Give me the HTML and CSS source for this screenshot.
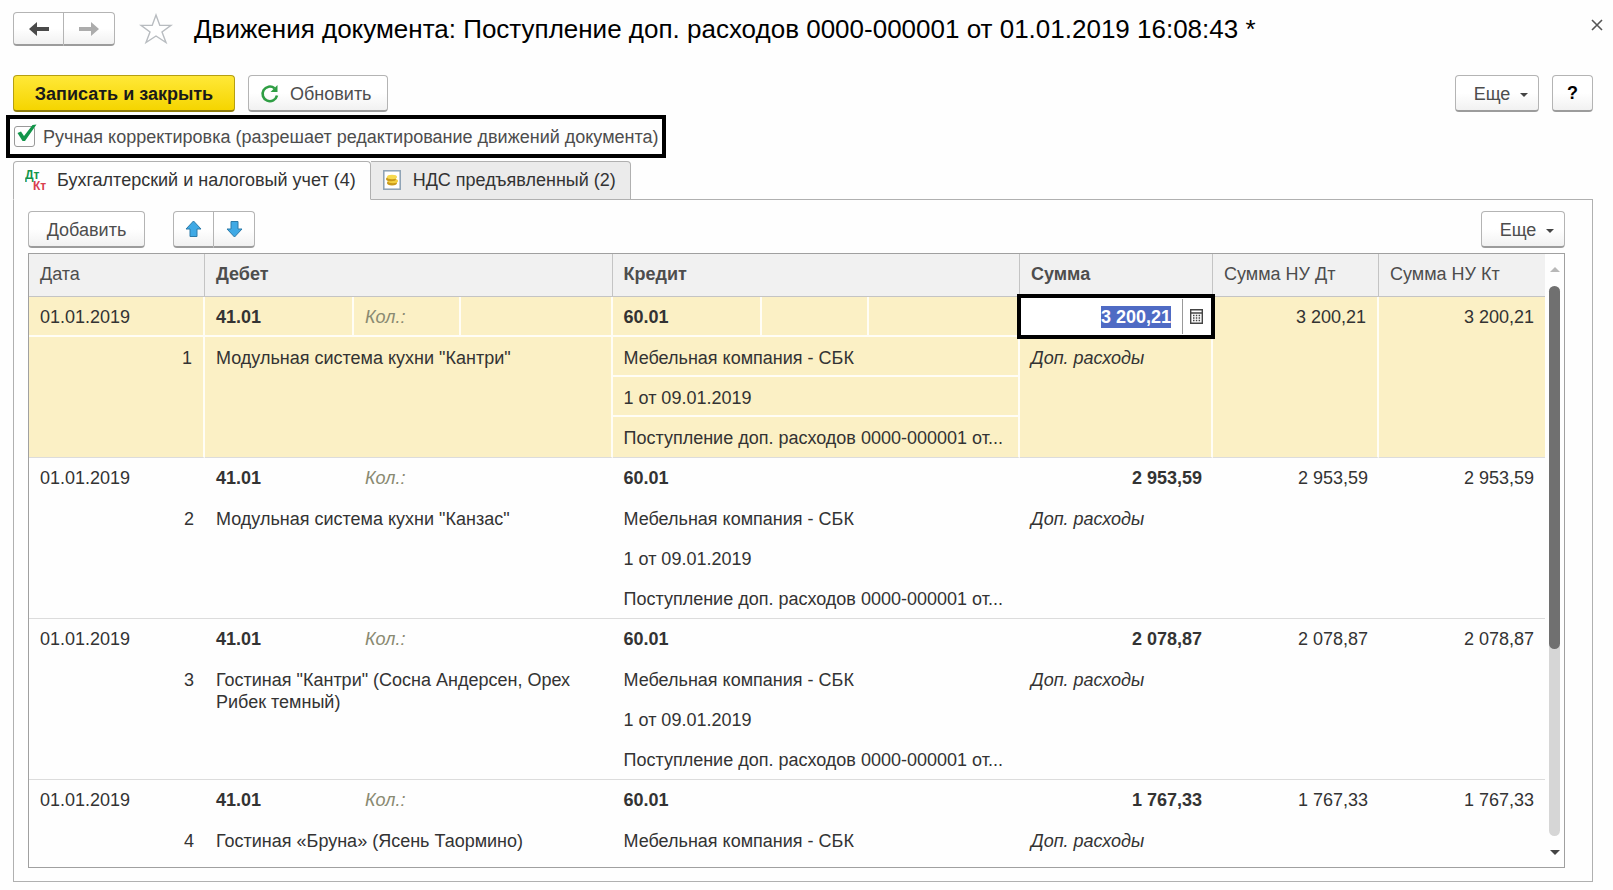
FILE: index.html
```
<!DOCTYPE html>
<html lang="ru">
<head>
    <meta charset="UTF-8">
    <meta name="viewport" content="width=device-width, initial-scale=1.0">
    <title>Движения документа</title>
    <link rel="stylesheet" href="styles.css">
</head>
<body>
    <header class="header">
        <div class="btn-group nav">
            <button class="btn" aria-label="Назад">
                <svg width="20" height="16" viewBox="0 0 20 16"><path d="M0 8 L8 1 V6 H20 V10 H8 V15 Z" fill="#4a4a4a"/></svg>
            </button>
            <button class="btn" aria-label="Вперед">
                <svg width="20" height="16" viewBox="0 0 20 16"><path d="M20 8 L12 1 V6 H0 V10 H12 V15 Z" fill="#acacac"/></svg>
            </button>
        </div>
        <svg class="star" width="34" height="32" viewBox="0 0 34 32"><path d="M17 2 L20.8 12.4 H32 L23 19 L27 29.5 L17 23 L7 29.5 L11 19 L2 12.4 H13.2 Z" fill="#fff" stroke="#b8bcc0" stroke-width="1.4"/></svg>
        <h1>Движения документа: Поступление доп. расходов 0000-000001 от 01.01.2019 16:08:43 *</h1>
        <button class="close" aria-label="Закрыть">
            <svg width="12" height="12" viewBox="0 0 12 12"><path d="M1 1 L11 11 M11 1 L1 11" stroke="#555" stroke-width="1.6"/></svg>
        </button>
    </header>

    <div class="toolbar">
        <button class="btn primary">Записать и закрыть</button>
        <button class="btn refresh">
            <svg width="20" height="20" viewBox="0 0 20 20"><path d="M14.5 4.2 A7.3 7.3 0 1 0 17 11.5" fill="none" stroke="#2f9e44" stroke-width="2.6"/><path d="M17.5 1 V8 H10.5 Z" fill="#2f9e44"/></svg>
            Обновить
        </button>
        <button class="btn more">Еще <span class="caret"></span></button>
        <button class="btn help">?</button>
    </div>

    <div class="manual">
        <span class="check">
            <input type="checkbox" id="manual" checked>
            <svg width="22" height="20" viewBox="0 0 22 20"><path d="M2.5 9 L6 7.5 L9 12 L17.5 1 L21.5 0.5 L10 17 H7.5 Z" fill="#12954a"/></svg>
        </span>
        <label for="manual">Ручная корректировка (разрешает редактирование движений документа)</label>
    </div>

    <div class="tabs" role="tablist">
        <button class="tab active" role="tab" aria-selected="true">
            <svg width="24" height="24" viewBox="0 0 24 24" class="dtkt"><text x="0" y="11" fill="#12954a">Дт</text><text x="8" y="22" fill="#d9404f">Кт</text></svg>
            Бухгалтерский и налоговый учет (4)
        </button>
        <button class="tab" role="tab" aria-selected="false">
            <svg width="18" height="20" viewBox="0 0 18 20"><rect x="0.8" y="0.8" width="16.4" height="18.4" fill="#fff" stroke="#8ba0b3" stroke-width="1.5"/><ellipse cx="9" cy="13" rx="5" ry="2.4" fill="#c99a1c"/><ellipse cx="10" cy="11" rx="5" ry="2.2" fill="#f3cf3f"/><ellipse cx="8" cy="9" rx="5" ry="2.2" fill="#c99a1c"/><ellipse cx="9" cy="7" rx="5" ry="2.2" fill="#f6d94f"/></svg>
            НДС предъявленный (2)
        </button>
    </div>

    <main class="panel">
        <div class="panel-bar">
            <button class="btn add">Добавить</button>
            <div class="btn-group move">
                <button class="btn" aria-label="Вверх">
                    <svg width="17" height="18" viewBox="0 0 17 18"><path d="M8.5 1 L16 9 H12 V16.5 H5 V9 H1 Z" fill="#3fa9e5" stroke="#2c7aa8"/></svg>
                </button>
                <button class="btn" aria-label="Вниз">
                    <svg width="17" height="18" viewBox="0 0 17 18"><path d="M8.5 17 L16 9 H12 V1.5 H5 V9 H1 Z" fill="#3fa9e5" stroke="#2c7aa8"/></svg>
                </button>
            </div>
            <button class="btn more">Еще <span class="caret"></span></button>
        </div>

        <div class="grid">
            <div class="grid-body">
                <table>
                    <colgroup>
                        <col class="c-date">
                        <col class="c-account"><col class="c-qty"><col>
                        <col class="c-account"><col class="c-qty"><col>
                        <col class="c-sum"><col class="c-nu"><col class="c-nu">
                    </colgroup>
                    <thead>
                        <tr>
                            <th>Дата</th>
                            <th colspan="3" class="bold">Дебет</th>
                            <th colspan="3" class="bold">Кредит</th>
                            <th class="bold">Сумма</th>
                            <th>Сумма НУ Дт</th>
                            <th>Сумма НУ Кт</th>
                        </tr>
                    </thead>
                    <tbody class="selected">
                        <tr>
                            <td>01.01.2019</td>
                            <td class="bold">41.01</td><td class="qty">Кол.:</td><td></td>
                            <td class="bold">60.01</td><td></td><td></td>
                            <td class="edit-cell">
                                <div class="editor">
                                    <input type="text" id="sum" value="3 200,21" aria-label="Сумма">
                                    <button aria-label="Калькулятор">
                                        <svg width="13" height="15" viewBox="0 0 13 15"><path d="M0.7 0.7 H12.3 V14.3 H0.7 Z M1 4 H12" fill="none" stroke="#444" stroke-width="1.4"/><path d="M3 6.5 H10.5 M3 9 H10.5 M3 11.5 H10.5" stroke="#444" stroke-width="1.5" stroke-dasharray="1.5 1.3"/></svg>
                                    </button>
                                </div>
                            </td>
                            <td rowspan="4" class="num last">3 200,21</td>
                            <td rowspan="4" class="num last">3 200,21</td>
                        </tr>
                        <tr>
                            <td rowspan="3" class="num last">1</td>
                            <td rowspan="3" colspan="3" class="last">Модульная система кухни "Кантри"</td>
                            <td colspan="3">Мебельная компания - СБК</td>
                            <td rowspan="3" class="note last">Доп. расходы</td>
                        </tr>
                        <tr><td colspan="3">1 от 09.01.2019</td></tr>
                        <tr><td colspan="3" class="last">Поступление доп. расходов 0000-000001 от...</td></tr>
                    </tbody>
                    <tbody>
                        <tr>
                            <td>01.01.2019</td>
                            <td class="bold">41.01</td><td class="qty">Кол.:</td><td></td>
                            <td class="bold">60.01</td><td></td><td></td>
                            <td class="num bold">2 953,59</td>
                            <td rowspan="4" class="num last">2 953,59</td>
                            <td rowspan="4" class="num last">2 953,59</td>
                        </tr>
                        <tr>
                            <td rowspan="3" class="num last">2</td>
                            <td rowspan="3" colspan="3" class="last">Модульная система кухни "Канзас"</td>
                            <td colspan="3">Мебельная компания - СБК</td>
                            <td rowspan="3" class="note last">Доп. расходы</td>
                        </tr>
                        <tr><td colspan="3">1 от 09.01.2019</td></tr>
                        <tr><td colspan="3" class="last">Поступление доп. расходов 0000-000001 от...</td></tr>
                    </tbody>
                    <tbody>
                        <tr>
                            <td>01.01.2019</td>
                            <td class="bold">41.01</td><td class="qty">Кол.:</td><td></td>
                            <td class="bold">60.01</td><td></td><td></td>
                            <td class="num bold">2 078,87</td>
                            <td rowspan="4" class="num last">2 078,87</td>
                            <td rowspan="4" class="num last">2 078,87</td>
                        </tr>
                        <tr>
                            <td rowspan="3" class="num last">3</td>
                            <td rowspan="3" colspan="3" class="last">Гостиная "Кантри" (Сосна Андерсен, Орех Рибек темный)</td>
                            <td colspan="3">Мебельная компания - СБК</td>
                            <td rowspan="3" class="note last">Доп. расходы</td>
                        </tr>
                        <tr><td colspan="3">1 от 09.01.2019</td></tr>
                        <tr><td colspan="3" class="last">Поступление доп. расходов 0000-000001 от...</td></tr>
                    </tbody>
                    <tbody>
                        <tr>
                            <td>01.01.2019</td>
                            <td class="bold">41.01</td><td class="qty">Кол.:</td><td></td>
                            <td class="bold">60.01</td><td></td><td></td>
                            <td class="num bold">1 767,33</td>
                            <td rowspan="2" class="num">1 767,33</td>
                            <td rowspan="2" class="num">1 767,33</td>
                        </tr>
                        <tr>
                            <td class="num">4</td>
                            <td colspan="3">Гостиная «Бруна» (Ясень Таормино)</td>
                            <td colspan="3">Мебельная компания - СБК</td>
                            <td class="note">Доп. расходы</td>
                        </tr>
                    </tbody>
                </table>
            </div>
            <div class="scrollbar">
                <span class="arrow-up"></span>
                <div class="track"><div class="thumb"></div></div>
                <span class="arrow-down"></span>
            </div>
        </div>
    </main>

    <script>
        document.addEventListener("DOMContentLoaded", function () {
            let sum = document.getElementById("sum");
            sum.focus();
            sum.select();
        });
    </script>
</body>
</html>
```
FILE: styles.css
```
* {
    box-sizing: border-box;
}
body {
    display: flex;
    flex-direction: column;
    height: 100vh;
    margin: 0;
    padding: 11px 20px 8px 13px;
    overflow: hidden;
    background: #fefefe;
    color: #333;
    font-family: "Liberation Sans", Arial, sans-serif;
    font-size: 18px;
    line-height: 22px;
}
button, input {
    font: inherit;
    color: inherit;
}
svg {
    display: block;
    flex: none;
}
.bold {
    font-weight: bold;
}

/* buttons */
.btn {
    display: flex;
    align-items: center;
    justify-content: center;
    height: 37px;
    padding: 1px 18px 0;
    border: 1px solid #b4b4b4;
    border-bottom: 2px solid #9c9c9c;
    border-radius: 4px;
    background: linear-gradient(#fff 50%, #f1f1f1);
    color: #4d4d4d;
    white-space: nowrap;
}
.btn-group {
    display: flex;
}
.btn-group .btn {
    padding: 0;
}
.btn-group .btn:first-child {
    border-radius: 4px 0 0 4px;
}
.btn-group .btn:last-child {
    border-left: 0;
    border-radius: 0 4px 4px 0;
}
.nav .btn {
    width: 51px;
    height: 34px;
}
.move .btn {
    width: 41px;
}
.caret {
    margin: 2px 0 0 10px;
    border: 4px solid transparent;
    border-top-color: #444;
    border-bottom: 0;
}

/* header */
.header {
    display: flex;
    align-items: center;
    height: 36px;
}
.star {
    margin: 0 21px 0 24px;
}
h1 {
    flex: 1;
    margin: 0;
    color: #000;
    font-size: 26px;
    font-weight: normal;
    line-height: 38px;
    white-space: nowrap;
}
.close {
    align-self: flex-start;
    margin: 8px -10px 0 0;
    padding: 0;
    border: 0;
    background: none;
}

.toolbar {
    display: flex;
    gap: 13px;
    margin-top: 28px;
}
.primary {
    width: 222px;
    border-color: #b59f12;
    border-bottom-color: #8f7d0a;
    background: linear-gradient(#ffe838, #f5d500);
    color: #1a1a1a;
    font-weight: bold;
}
.refresh {
    justify-content: flex-start;
    gap: 10px;
    width: 140px;
    padding-left: 11px;
}
.more {
    width: 84px;
    margin-left: auto;
    padding: 1px 8px 0 16px;
}
.help {
    width: 41px;
    padding: 0;
    color: #000;
    font-weight: bold;
}

/* manual edit checkbox */
.manual {
    display: flex;
    align-self: flex-start;
    align-items: center;
    gap: 8px;
    height: 43px;
    margin: 3px 0 3px -7px;
    padding: 0 3px 0 4px;
    border: 4px solid #000;
    color: #4d4d4d;
    white-space: nowrap;
}
.check {
    position: relative;
    height: 21px;
}
.check input {
    display: block;
    width: 21px;
    height: 21px;
    margin: 0;
    border: 1px solid #999;
    border-radius: 3px;
    appearance: none;
}
.check svg {
    position: absolute;
    top: -2px;
    left: 1px;
    pointer-events: none;
}

/* tabs */
.tabs {
    display: flex;
    position: relative;
    margin-bottom: -1px;
}
.tab {
    display: flex;
    align-items: center;
    gap: 12px;
    height: 39px;
    padding: 0 14px 2px 12px;
    border: 1px solid #b0b0b0;
    border-left: 0;
    border-radius: 0 4px 0 0;
    background: #ebebeb;
    white-space: nowrap;
}
.tab.active {
    gap: 8px;
    padding-left: 11px;
    border-left: 1px solid #b0b0b0;
    border-bottom-color: #fefefe;
    border-radius: 4px 4px 0 0;
    background: #fefefe;
}
.dtkt {
    font-size: 12px;
    font-weight: bold;
}

/* panel */
.panel {
    display: flex;
    flex: 1;
    flex-direction: column;
    min-height: 0;
    padding: 11px 27px 13px 14px;
    border: 1px solid #b0b0b0;
}
.panel-bar {
    display: flex;
    gap: 28px;
    margin-bottom: 5px;
}
.add {
    width: 117px;
}
.grid {
    display: flex;
    flex: 1;
    min-height: 0;
    border: 1px solid #a0a0a0;
}
.grid-body {
    flex: 1;
    overflow: hidden;
}
table {
    width: 100%;
    border-collapse: separate;
    border-spacing: 0;
    table-layout: fixed;
}
.c-date {
    width: 176px;
}
.c-account {
    width: 149px;
}
.c-qty {
    width: 107px;
}
.c-sum {
    width: 193px;
}
.c-nu {
    width: 166px;
}
th {
    height: 43px;
    padding: 0 11px 2px 11px;
    border-right: 1px solid #c4c4c4;
    border-bottom: 1px solid #c4c4c4;
    background: #f1f1f1;
    color: #4d4d4d;
    font-weight: normal;
    text-align: left;
}
th.bold {
    font-weight: bold;
}
th:last-child {
    border-right: 0;
}
td {
    height: 40px;
    padding: 10px 11px 0;
    vertical-align: top;
}
tr:first-child td {
    padding-top: 9px;
}
.selected td {
    border-right: 2px solid #fffdf5;
    border-bottom: 2px solid #fffdf5;
    background: #fbf0c5;
}
td.last {
    border-bottom: 1px solid #dcdcdc;
}
tr:last-child td.last {
    height: 41px;
}
.selected tr:first-child td:last-child {
    border-right: 0;
}
.num {
    text-align: right;
}
.qty {
    color: #8a8a72;
    font-style: italic;
}
.note {
    font-style: italic;
}

/* sum cell being edited */
.edit-cell {
    position: relative;
}
.editor {
    display: flex;
    position: absolute;
    top: -3px;
    right: -4px;
    bottom: -4px;
    left: -3px;
    border: 4px solid #000;
    background: #fff;
}
.editor input {
    flex: 1;
    min-width: 0;
    padding: 0 11px 0 0;
    border: 0;
    outline: 0;
    background: none;
    font-weight: bold;
    text-align: right;
}
.editor input::selection {
    background: #4f6bc4;
    color: #fff;
}
.editor button {
    width: 29px;
    margin: 1px 0;
    padding: 0 0 0 7px;
    border: 0;
    border-left: 1px solid #999;
    background: none;
}

/* scrollbar */
.scrollbar {
    display: flex;
    flex-direction: column;
    align-items: center;
    width: 19px;
    padding: 13px 0 12px;
}
.arrow-up, .arrow-down {
    border: 5px solid transparent;
}
.arrow-up {
    border-top: 0;
    border-bottom-color: #b8b8b8;
}
.arrow-down {
    border-top-color: #444;
    border-bottom: 0;
}
.track {
    flex: 1;
    width: 11px;
    margin: 14px 0;
    border-radius: 6px;
    background: #d6d6d6;
}
.thumb {
    height: 66%;
    border-radius: 6px;
    background: #707070;
}
```
